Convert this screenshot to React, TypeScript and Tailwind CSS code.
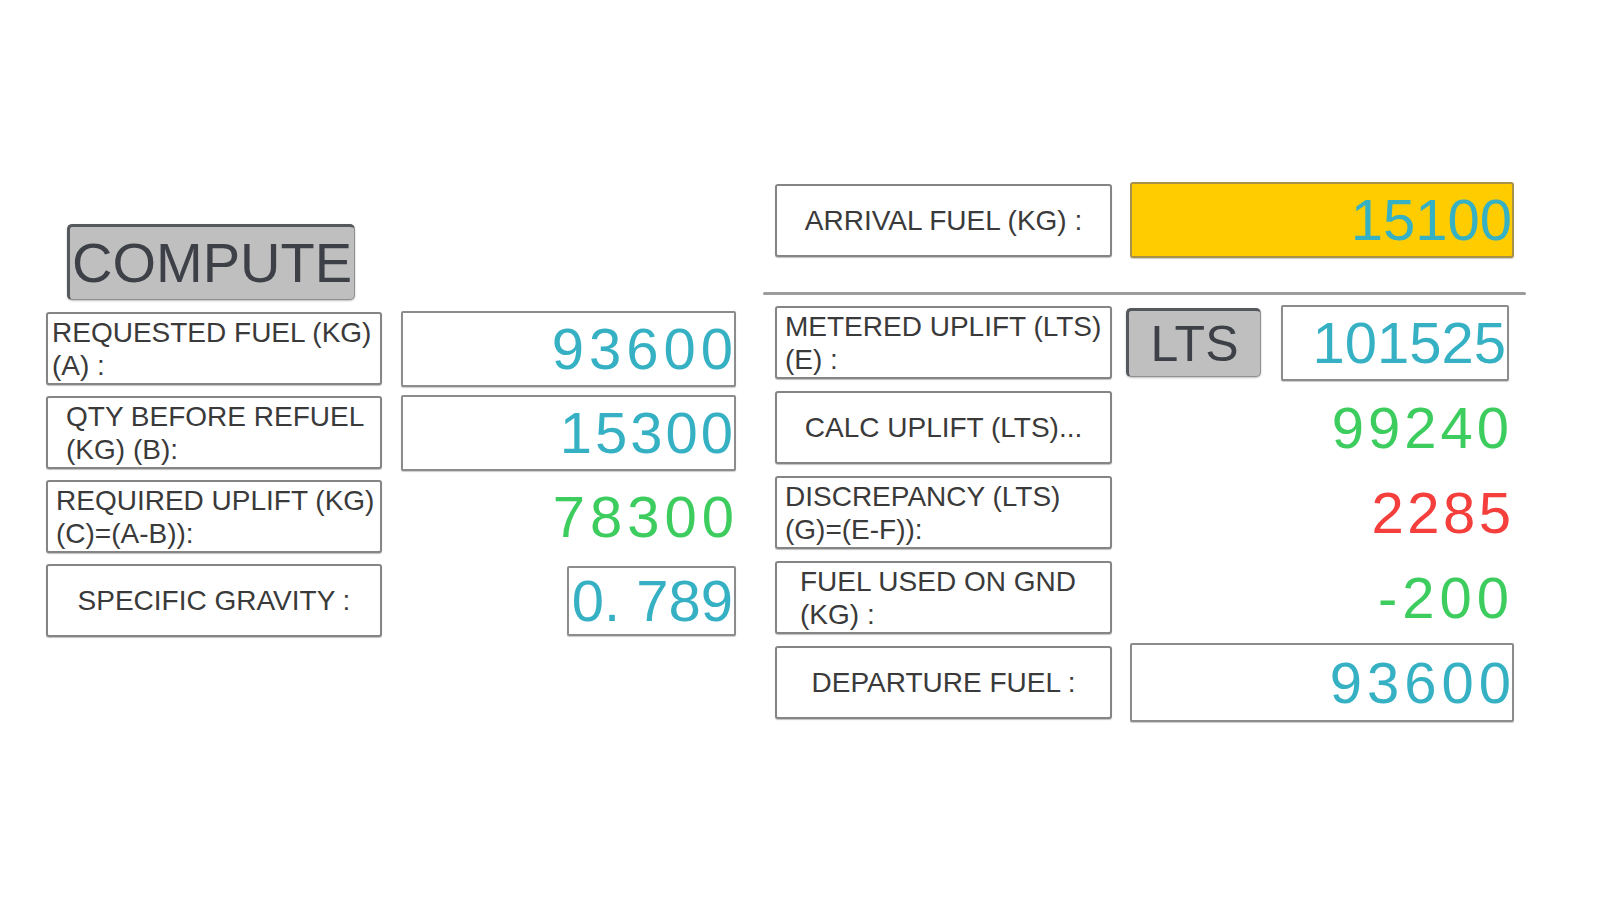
const FONT = "font-['Liberation_Sans','Arimo',Arial,sans-serif]"

type LabelProps = {
  lines: string[]
  pl?: string
  w?: string
}

function Label({ lines, pl = 'pl-[10px]', w = 'w-[336px]' }: LabelProps) {
  const single = lines.length === 1
  return (
    <div
      className={`${w} h-[73px] shrink-0 border-2 border-[#858585] rounded-[3px] bg-white shadow-[0_1px_1px_rgba(0,0,0,0.25)] flex flex-col justify-center text-[28px] leading-[33px] text-[#3a3a3a] whitespace-nowrap overflow-hidden ${
        single ? 'items-center' : `items-start ${pl}`
      }`}
    >
      {lines.map(l => (
        <span key={l}>{l}</span>
      ))}
    </div>
  )
}

// spacing widens the digits except the last one, so the right edge stays put
function Digits({ value, spacing = '' }: { value: string; spacing?: string }) {
  return (
    <span className="whitespace-nowrap">
      <span className={spacing}>{value.slice(0, -1)}</span>
      {value.slice(-1)}
    </span>
  )
}

function ValueBox({ value, className, spacing }: { value: string; className: string; spacing?: string }) {
  return (
    <div
      className={`shrink-0 border-2 border-[#8c8c8c] rounded-[2px] bg-white shadow-[0_1px_1px_rgba(0,0,0,0.2)] flex items-center justify-end pr-[1px] text-[58px] leading-none text-[#36b1c4] ${className}`}
    >
      <Digits value={value} spacing={spacing} />
    </div>
  )
}

function Plain({ value, color, spacing, pr }: { value: string; color: string; spacing: string; pr: string }) {
  return (
    <div className={`flex-1 flex justify-end ${pr} text-[58px] leading-none ${color}`}>
      <Digits value={value} spacing={spacing} />
    </div>
  )
}

function GrayButton({ text, className }: { text: string; className: string }) {
  return (
    <div
      className={`shrink-0 flex items-center justify-center bg-[#bfbfbf] rounded-[5px] border-t-[3px] border-l-[3px] border-r border-b border-t-[#55595e] border-l-[#55595e] border-r-[#8f8f8f] border-b-[#8f8f8f] shadow-[0_1px_2px_rgba(0,0,0,0.25)] leading-none text-[#3d4147] ${className}`}
    >
      {text}
    </div>
  )
}

export default function App() {
  return (
    <div className={`w-[1599px] h-[900px] bg-white overflow-hidden ${FONT}`}>
      <div className="flex items-start">
        {/* left column */}
        <div className="ml-[46px] mt-[224px] w-[690px] flex flex-col">
          <GrayButton text="COMPUTE" className="ml-[21px] w-[288px] h-[76px] text-[56px]" />

          <div className="mt-[12px] flex flex-col gap-[11px]">
            <div className="flex items-center h-[73px]">
              <Label lines={['REQUESTED FUEL (KG)', '(A) :']} pl="pl-[4px]" />
              <div className="flex-1 flex justify-end">
                <ValueBox value="93600" className="w-[335px] h-[76px]" spacing="tracking-[5px]" />
              </div>
            </div>

            <div className="flex items-center h-[73px]">
              <Label lines={['QTY BEFORE REFUEL', '(KG) (B):']} pl="pl-[18px]" />
              <div className="flex-1 flex justify-end">
                <ValueBox value="15300" className="w-[335px] h-[76px]" spacing="tracking-[3px]" />
              </div>
            </div>

            <div className="flex items-center h-[73px]">
              <Label lines={['REQUIRED UPLIFT (KG)', '(C)=(A-B)):']} pl="pl-[8px]" />
              <Plain value="78300" color="text-[#3dcc5e]" spacing="tracking-[5px]" pr="pr-[2px]" />
            </div>

            <div className="flex items-center h-[73px]">
              <Label lines={['SPECIFIC GRAVITY :']} />
              <div className="flex-1 flex justify-end">
                <ValueBox value="0. 789" className="w-[169px] h-[70px]" />
              </div>
            </div>
          </div>
        </div>

        {/* right column */}
        <div className="ml-[39px] mt-[182px] w-[739px] flex flex-col">
          <div className="flex items-center h-[76px]">
            <Label lines={['ARRIVAL FUEL (KG) :']} w="w-[337px]" />
            <div className="ml-[18px] w-[384px] h-[76px] border-2 border-[#a8924a] rounded-[3px] bg-[#ffcc00] flex items-center justify-end text-[58px] leading-none text-[#36b1c4] shadow-[0_1px_1px_rgba(0,0,0,0.2)]">
              15100
            </div>
          </div>

          <div className="mt-[34px] -mx-[12px] h-[3px] rounded-full bg-[#9c9c9c]" />

          <div className="mt-[11px] flex flex-col gap-[12px]">
            <div className="flex items-center h-[73px]">
              <Label lines={['METERED UPLIFT (LTS)', '(E) :']} w="w-[337px]" pl="pl-[8px]" />
              <GrayButton text="LTS" className="ml-[14px] w-[135px] h-[69px] text-[50px]" />
              <ValueBox value="101525" className="ml-[20px] w-[228px] h-[76px]" />
            </div>

            <div className="flex items-center h-[73px]">
              <Label lines={['CALC UPLIFT (LTS)...']} w="w-[337px]" />
              <Plain value="99240" color="text-[#3dcc5e]" spacing="tracking-[4px]" pr="pr-[5px]" />
            </div>

            <div className="flex items-center h-[73px]">
              <Label lines={['DISCREPANCY (LTS)', '(G)=(E-F)):']} w="w-[337px]" pl="pl-[8px]" />
              <Plain value="2285" color="text-[#f43f3c]" spacing="tracking-[3.5px]" pr="pr-[3px]" />
            </div>

            <div className="flex items-center h-[73px]">
              <Label lines={['FUEL USED ON GND', '(KG) :']} w="w-[337px]" pl="pl-[23px]" />
              <Plain value="-200" color="text-[#3dcc5e]" spacing="tracking-[5px]" pr="pr-[5px]" />
            </div>

            <div className="flex items-center h-[73px]">
              <Label lines={['DEPARTURE FUEL :']} w="w-[337px]" />
              <ValueBox value="93600" className="ml-[18px] w-[384px] h-[79px]" spacing="tracking-[5px]" />
            </div>
          </div>
        </div>
      </div>
    </div>
  )
}
